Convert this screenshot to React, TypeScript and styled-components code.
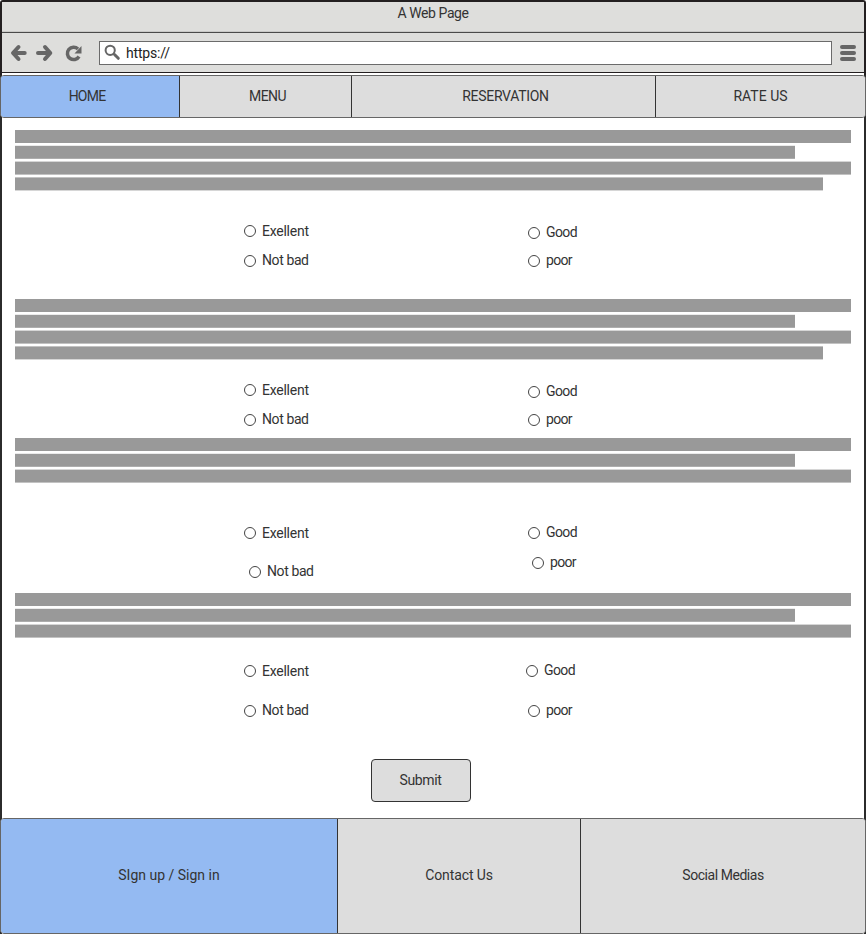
import React from "react";
import styled, { createGlobalStyle } from "styled-components";

const GlobalStyle = createGlobalStyle`
  *, *::before, *::after { box-sizing: border-box; }
  body { margin: 0; background: #fff; }
`;

const Page = styled.div`
  width: 866px;
  height: 934px;
  display: flex;
  flex-direction: column;
  overflow: hidden;
  background: linear-gradient(90deg, #2b2b2b 2px, #fff 2px, #fff 864px, #2b2b2b 864px) 0 60px no-repeat;
  color: #333;
  font-family: Roboto, "Liberation Sans", sans-serif;
  font-size: 14px;
  line-height: 16px;
`;

const Chrome = styled.header`
  height: 75px;
  flex: none;
  border: 2px solid #231f20;
  border-bottom: 0;
  border-radius: 3px 3px 0 0;
  background: #fff;
`;

const TitleBar = styled.div`
  height: 31px;
  padding-top: 4px;
  display: flex;
  justify-content: center;
  background: #dededc;
  border-bottom: 1px solid #4a4a4a;
  box-shadow: inset 0 -1px #c9c9c7;
`;

const Toolbar = styled.div`
  height: 40px;
  display: flex;
  align-items: flex-start;
  padding: 8px 8px 0;
  background: #dededc;
  border-bottom: 1px solid #231f20;
`;

const NavIcons = styled.svg`
  width: 74px;
  height: 24px;
  margin-right: 15px;
  flex: none;
`;

const AddressBar = styled.div`
  width: 733px;
  height: 24px;
  display: flex;
  align-items: center;
  padding-left: 4px;
  gap: 4px;
  border: 1px solid #6b6b6b;
  background: #fff;
  color: #222;
`;

const MenuIcon = styled.svg`
  width: 16px;
  height: 24px;
  margin-left: 8px;
  flex: none;
`;

const Label = styled.span<{ $spacing?: number; $x?: number; $y?: number }>`
  display: block;
  white-space: nowrap;
  letter-spacing: ${(p) => p.$spacing ?? 0}px;
  transform: translate(${(p) => p.$x ?? 0}px, ${(p) => p.$y ?? 0}px);
`;

const TabBar = styled.nav<{ $height: number; $columns: string }>`
  height: ${(p) => p.$height}px;
  flex: none;
  display: grid;
  grid-template-columns: ${(p) => p.$columns};
  border: 1px solid #666;
  border-radius: 4px;
  overflow: hidden;
  background: #ddd;
`;

const Tab = styled.a<{ $active?: boolean }>`
  display: flex;
  align-items: center;
  justify-content: center;
  background: ${(p) => (p.$active ? "#94baf2" : "#ddd")};
  border-right: 1px solid #333;
  &:last-child { border-right: 0; }
`;

const Content = styled.main`
  height: 700px;
  flex: none;
  padding: 12px 13px 0;
  border: solid #2b2b2b;
  border-width: 0 2px;
`;

const Question = styled.section<{ $height: number }>`
  height: ${(p) => p.$height}px;
`;

const Lines = styled.div`
  display: grid;
  gap: 2px;
`;

const Line = styled.div<{ $width: number; $top?: string; $bottom?: string }>`
  width: ${(p) => p.$width}px;
  height: ${(p) => (p.$top ? 14 : 13)}px;
  background: #999;
  border-top: ${(p) => (p.$top ? `1px solid ${p.$top}` : "0")};
  border-bottom: ${(p) => (p.$bottom ? `1px solid ${p.$bottom}` : "0")};
`;

const Options = styled.div`
  display: grid;
  grid-template-columns: 284px 284px;
  padding-left: 229px;
`;

const Column = styled.div`
  display: flex;
  flex-direction: column;
`;

const Option = styled.label<{ $gap: number; $indent?: number }>`
  height: 12px;
  margin-top: ${(p) => p.$gap}px;
  margin-left: ${(p) => p.$indent ?? 0}px;
  display: flex;
  align-items: center;
  gap: 6px;
`;

const Radio = styled.span`
  width: 12px;
  height: 12px;
  flex: none;
  border: 1px solid #444;
  border-radius: 50%;
  background: #fff;
`;

const SubmitButton = styled.button`
  display: flex;
  align-items: center;
  justify-content: center;
  width: 100px;
  height: 43px;
  margin: 42px 0 0 356px;
  padding: 0;
  border: 1px solid #333;
  border-radius: 4px;
  background: #ddd;
  color: inherit;
  font: inherit;
`;

const LINES = [
  { width: 836 },
  { width: 780, top: "#ebebeb", bottom: "#adadad" },
  { width: 836, top: "#d6d6d6", bottom: "#c2c2c2" },
  { width: 808, top: "#c2c2c2", bottom: "#d6d6d6" },
];

type Choice = { text: string; gap: number; indent?: number };
type Item = { height: number; lines: number; left: Choice[]; right: Choice[] };

const QUESTIONS: Item[] = [
  {
    height: 169,
    lines: 4,
    left: [{ text: "Exellent", gap: 34 }, { text: "Not bad", gap: 18 }],
    right: [{ text: "Good", gap: 36 }, { text: "poor", gap: 16 }],
  },
  {
    height: 139,
    lines: 4,
    left: [{ text: "Exellent", gap: 24 }, { text: "Not bad", gap: 18 }],
    right: [{ text: "Good", gap: 26 }, { text: "poor", gap: 16 }],
  },
  {
    height: 155,
    lines: 3,
    left: [{ text: "Exellent", gap: 44 }, { text: "Not bad", gap: 27, indent: 5 }],
    right: [{ text: "Good", gap: 44 }, { text: "poor", gap: 18, indent: 4 }],
  },
  {
    height: 124,
    lines: 3,
    left: [{ text: "Exellent", gap: 27 }, { text: "Not bad", gap: 28 }],
    right: [{ text: "Good", gap: 27, indent: -2 }, { text: "poor", gap: 28 }],
  },
];

const SPACING: Record<string, number> = { Exellent: -0.25, "Not bad": -0.4, Good: -0.6, poor: -0.7 };

const Choices = ({ items }: { items: Choice[] }) => (
  <Column>
    {items.map((c) => (
      <Option key={c.text} $gap={c.gap} $indent={c.indent}>
        <Radio />
        <Label $spacing={SPACING[c.text]} $y={c.text === "Exellent" ? 0 : -1}>{c.text}</Label>
      </Option>
    ))}
  </Column>
);

export default function App() {
  return (
    <>
      <GlobalStyle />
      <Page>
        <Chrome>
          <TitleBar><Label $spacing={-0.4} $y={-1}>A Web Page</Label></TitleBar>
          <Toolbar>
            <NavIcons viewBox="0 0 74 24" fill="none" stroke="#666" strokeWidth="4" strokeLinecap="round" strokeLinejoin="round">
              <path d="M8.500 6 3 12l5.500 6M4 12h10.700" />
              <path d="M35 6 40.300 12 35 18M39 12H28" />
              <path d="M69 15.500A6.200 6.200 0 1 1 68 8" strokeWidth="3.500" strokeLinecap="butt" />
              <path d="M71.500 5v7.500H64.500z" fill="#666" stroke="none" />
            </NavIcons>
            <AddressBar>
              <svg width="18" height="18" viewBox="0 0 18 18" fill="none" stroke="#666">
                <circle cx="6.200" cy="6.300" r="4.600" strokeWidth="2" />
                <path d="m10.500 10.500 3.800 3.800" strokeWidth="3" strokeLinecap="round" />
              </svg>
              <Label $spacing={-0.2}>https://</Label>
            </AddressBar>
            <MenuIcon viewBox="0 0 16 24" stroke="#666" strokeWidth="4" strokeLinecap="round">
              <path d="M2 6h12M2 12h12M2 18h12" />
            </MenuIcon>
          </Toolbar>
        </Chrome>
        <TabBar $height={43} $columns="179px 172px 304px 1fr">
          <Tab $active><Label $spacing={-0.8} $x={-3} $y={-1}>HOME</Label></Tab>
          <Tab><Label $spacing={-0.6} $x={2} $y={-1}>MENU</Label></Tab>
          <Tab><Label $spacing={-0.3} $x={2} $y={-1}>RESERVATION</Label></Tab>
          <Tab><Label $y={-1}>RATE US</Label></Tab>
        </TabBar>
        <Content>
          {QUESTIONS.map((q, i) => (
            <Question key={i} $height={q.height}>
              <Lines>
                {LINES.slice(0, q.lines).map((l, j) => (
                  <Line key={j} $width={l.width} $top={l.top} $bottom={l.bottom} />
                ))}
              </Lines>
              <Options>
                <Choices items={q.left} />
                <Choices items={q.right} />
              </Options>
            </Question>
          ))}
          <SubmitButton type="button"><Label $spacing={-0.4} $x={-0.5} $y={-1}>Submit</Label></SubmitButton>
        </Content>
        <TabBar $height={116} $columns="337px 243px 1fr">
          <Tab $active><Label $y={-1}>SIgn up / Sign in</Label></Tab>
          <Tab><Label $spacing={-0.1} $y={-1}>Contact Us</Label></Tab>
          <Tab><Label $spacing={-0.45} $y={-1}>Social Medias</Label></Tab>
        </TabBar>
      </Page>
    </>
  );
}
